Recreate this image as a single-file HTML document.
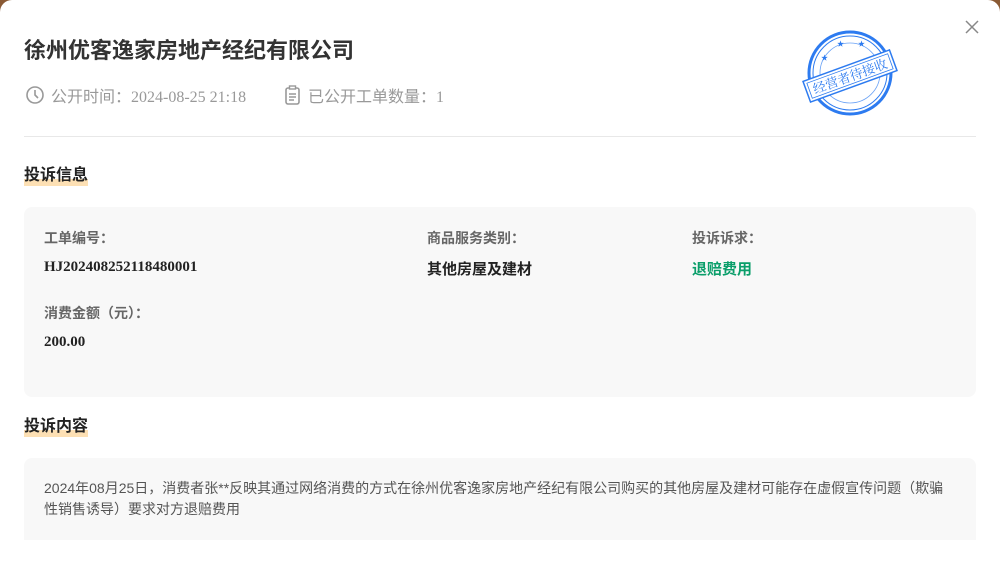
<!DOCTYPE html>
<html><head><meta charset="utf-8"><style>
html,body{margin:0;padding:0;width:1000px;height:564px;overflow:hidden;background:#8a5a34;}
.m{position:absolute;left:0;top:0;width:1000px;height:564px;background:#fff;border-radius:12px 12px 0 0;font-family:"Liberation Sans","Noto Sans CJK SC",sans-serif;color:#333;}
.t{position:absolute;left:24px;top:33px;font-size:22px;font-weight:bold;color:#333;}
.meta{position:absolute;top:83px;font-size:16px;color:#999;font-family:"Liberation Serif","Noto Sans CJK SC",serif;}
.hr{position:absolute;left:24px;right:24px;top:136px;height:1px;background:#e8e8e8;}
.h{position:absolute;left:24px;font-size:16px;font-weight:bold;color:#222;background:linear-gradient(transparent 65%,#fde0b4 65%);line-height:20px;}
.box{position:absolute;left:24px;right:24px;background:#f8f8f8;border-radius:8px;}
.l{position:absolute;font-size:14px;color:#666;font-weight:bold;}
.v{position:absolute;font-size:15px;color:#222;font-weight:bold;font-family:"Liberation Serif","Noto Sans CJK SC",serif;}
</style></head><body><div class="m">
<div class="t">徐州优客逸家房地产经纪有限公司</div>
<svg style="position:absolute;left:25px;top:85px" width="20" height="20" viewBox="0 0 20 20"><circle cx="10" cy="10" r="8" fill="none" stroke="#999" stroke-width="1.6"/><path d="M10 5v5l3 3" fill="none" stroke="#999" stroke-width="1.6"/></svg>
<div class="meta" style="left:51px">公开时间：2024-08-25 21:18</div>
<svg style="position:absolute;left:284px;top:85px" width="18" height="20" viewBox="0 0 18 20"><rect x="2" y="3" width="13" height="16" rx="2" fill="none" stroke="#999" stroke-width="1.6"/><rect x="5.5" y="1" width="6" height="3" fill="#fff" stroke="#999" stroke-width="1.4"/><path d="M5 9h7M5 12h7M5 15h5" stroke="#999" stroke-width="1.4"/></svg>
<div class="meta" style="left:308px">已公开工单数量：1</div>
<svg style="position:absolute;left:800px;top:28px" width="104" height="92" viewBox="0 0 104 92"><circle cx="50" cy="45" r="41" fill="none" stroke="#2d7bf0" stroke-width="3"/><circle cx="50" cy="45" r="37" fill="none" stroke="#2d7bf0" stroke-width="1"/><circle cx="50" cy="45" r="30" fill="none" stroke="#6aa2f5" stroke-width="0.8"/><text x="21" y="32" font-size="7" fill="#2d7bf0">★</text><text x="37" y="18" font-size="7" fill="#2d7bf0">★</text><text x="58" y="18" font-size="7" fill="#2d7bf0">★</text><g transform="rotate(-20 50 48)"><rect x="4" y="37" width="92" height="22" fill="#fff" stroke="#2d7bf0" stroke-width="1.5"/><rect x="7" y="40" width="86" height="16" fill="none" stroke="#2d7bf0" stroke-width="0.8"/><text x="50" y="53" text-anchor="middle" font-size="13" fill="#2d7bf0" font-family="Noto Serif CJK SC,serif">经营者待接收</text></g></svg>
<svg style="position:absolute;left:965px;top:20px" width="14" height="14" viewBox="0 0 14 14"><path d="M1 1l12 12M13 1L1 13" stroke="#888" stroke-width="1.5"/></svg>
<div class="hr"></div>
<div class="h" style="top:166px">投诉信息</div>
<div class="box" style="top:207px;height:190px">
<div class="l" style="left:20px;top:21px">工单编号：</div><div class="v" style="left:20px;top:52px">HJ202408252118480001</div>
<div class="l" style="left:403px;top:21px">商品服务类别：</div><div class="v" style="left:403px;top:51px;font-family:'Noto Sans CJK SC',sans-serif">其他房屋及建材</div>
<div class="l" style="left:668px;top:21px">投诉诉求：</div><div class="v" style="left:668px;top:51px;color:#0a9e6a;font-family:'Noto Sans CJK SC',sans-serif">退赔费用</div>
<div class="l" style="left:20px;top:96px">消费金额（元）：</div><div class="v" style="left:20px;top:127px">200.00</div>
</div>
<div class="h" style="top:417px">投诉内容</div>
<div class="box" style="top:458px;height:90px;border-radius:8px 8px 0 0">
<div style="position:absolute;left:20px;right:24px;top:20px;font-size:14px;line-height:21px;color:#555">2024年08月25日，消费者张**反映其通过网络消费的方式在徐州优客逸家房地产经纪有限公司购买的其他房屋及建材可能存在虚假宣传问题（欺骗性销售诱导）要求对方退赔费用</div>
</div>
<div style="position:absolute;left:0;right:0;top:540px;height:24px;background:#fff"></div>
</div></body></html>
